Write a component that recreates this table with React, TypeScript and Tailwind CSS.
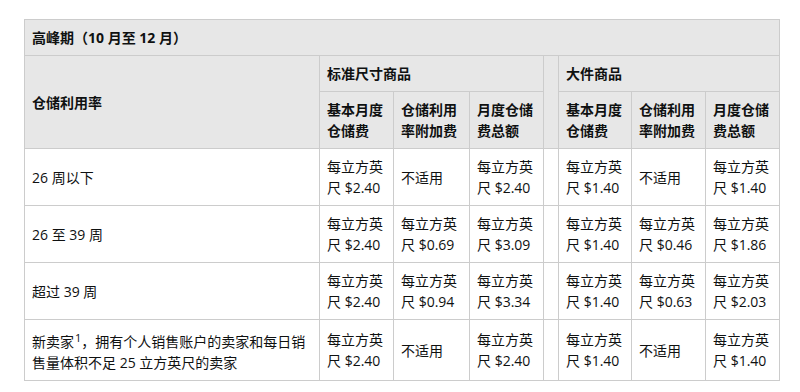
import React from "react";

const cell =
  "border border-[#cccccc] px-[7px] py-[7px] align-middle text-left";
const th = `${cell} bg-[#e7e7e7] font-bold`;

const P = ({ v }: { v: string }) => (
  <>
    每立方英
    <br />尺 ${v}
  </>
);

type Row = { label: React.ReactNode; s: (string | null)[]; l: (string | null)[] };

const rows: Row[] = [
  { label: "26 周以下", s: ["2.40", null, "2.40"], l: ["1.40", null, "1.40"] },
  { label: "26 至 39 周", s: ["2.40", "0.69", "3.09"], l: ["1.40", "0.46", "1.86"] },
  { label: "超过 39 周", s: ["2.40", "0.94", "3.34"], l: ["1.40", "0.63", "2.03"] },
  {
    label: (
      <>
        新卖家<span className="text-[11px] align-[5px] ml-[1px]">1</span>，拥有个人销售账户的卖家和每日销售量体积不足 25 立方英尺的卖家
      </>
    ),
    s: ["2.40", null, "2.40"],
    l: ["1.40", null, "1.40"],
  },
];

const V = ({ v }: { v: string | null }) => (
  <td className={cell}>{v === null ? "不适用" : <P v={v} />}</td>
);

export default function App() {
  return (
    <div
      className="min-h-[392px] bg-white pt-[19px] pl-[24px] text-[14px] leading-[21px] text-[#0f1111]"
      style={{ fontFamily: '"Open Sans", "Noto Sans CJK SC", sans-serif' }}
    >
      <table className="table-fixed border-collapse w-[755px]">
        <colgroup>
          <col className="w-[295px]" />
          <col className="w-[74px]" />
          <col className="w-[76px]" />
          <col className="w-[74px]" />
          <col className="w-[15px]" />
          <col className="w-[73px]" />
          <col className="w-[74px]" />
          <col className="w-[74px]" />
        </colgroup>
        <thead>
          <tr>
            <th colSpan={8} className={th}>
              高峰期（10 月至 12 月）
            </th>
          </tr>
          <tr>
            <th rowSpan={2} className={th}>
              仓储利用率
            </th>
            <th colSpan={3} className={th}>
              标准尺寸商品
            </th>
            <th rowSpan={2} className={`${th} px-0`}></th>
            <th colSpan={3} className={th}>
              大件商品
            </th>
          </tr>
          <tr>
            <th className={th}>基本月度仓储费</th>
            <th className={th}>仓储利用率附加费</th>
            <th className={th}>月度仓储费总额</th>
            <th className={th}>基本月度仓储费</th>
            <th className={th}>仓储利用率附加费</th>
            <th className={th}>月度仓储费总额</th>
          </tr>
        </thead>
        <tbody>
          {rows.map((r, i) => (
            <tr key={i}>
              <td className={cell}>{r.label}</td>
              {r.s.map((v, j) => (
                <V key={j} v={v} />
              ))}
              <td className={`${cell} px-0`}></td>
              {r.l.map((v, j) => (
                <V key={j} v={v} />
              ))}
            </tr>
          ))}
        </tbody>
      </table>
    </div>
  );
}
